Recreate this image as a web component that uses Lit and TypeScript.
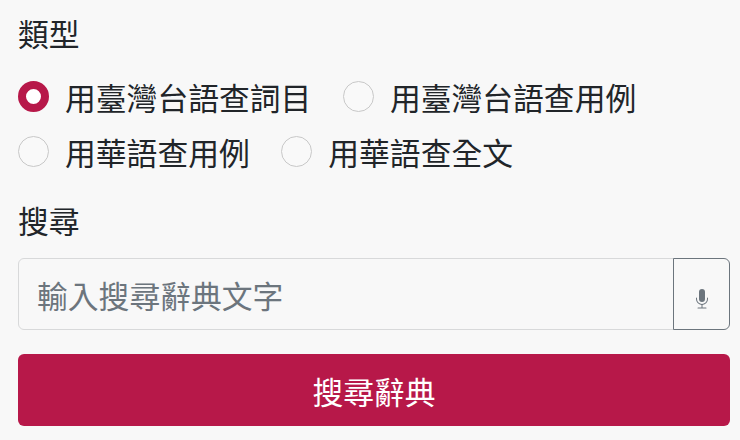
import { LitElement, html, css } from "lit";
import { customElement } from "lit/decorators.js";

@customElement("app-root")
export class AppRoot extends LitElement {
  static styles = css`
    :host { display: block; width: 740px; height: 440px; box-sizing: border-box; background: #f8f8f8; padding: 10px 10px 0 18px; overflow: hidden;
      font-family: "Noto Sans CJK TC", "Noto Sans CJK SC", sans-serif; color: #212529; font-size: 30.8px; line-height: 45px; }
    .label { height: 45px; }
    .radios { display: flex; flex-wrap: wrap; margin-top: 14px; width: 712px; }
    .radio { display: flex; align-items: center; gap: 16px; height: 55px; margin-right: 31.5px; }
    .dot { width: 31px; height: 31px; box-sizing: border-box; border-radius: 50%; border: 1px solid #c8c8c8; background: #f9f9f9; }
    .dot.on { border: 8.5px solid #b71849; background: #fff; }
    .search { margin-top: 18px; }
    .group { display: flex; margin-top: 16px; height: 72px; }
    .input { flex: 1; box-sizing: border-box; border: 1px solid #d8d9da; border-radius: 6px 0 0 6px; background: #f8f8f8; color: #6c757d; padding: 0 18px; display: flex; align-items: center; }
    .mic { width: 57px; box-sizing: border-box; border: 1px solid #6c757d; border-radius: 0 6px 6px 0; margin-left: -1px; display: flex; align-items: center; justify-content: center; padding-top: 9px; }
    .mic svg { width: 16px; height: 20px; fill: #6c757d; }
    .btn { margin-top: 24px; height: 72px; background: #b71849; color: #fff; border-radius: 6px; display: flex; align-items: center; justify-content: center; }
  `;
  render() {
    return html`
      <div class="label">類型</div>
      <div class="radios">
        <div class="radio"><span class="dot on"></span>用臺灣台語查詞目</div>
        <div class="radio"><span class="dot"></span>用臺灣台語查用例</div>
        <div class="radio"><span class="dot"></span>用華語查用例</div>
        <div class="radio"><span class="dot"></span>用華語查全文</div>
      </div>
      <div class="label search">搜尋</div>
      <div class="group">
        <div class="input">輸入搜尋辭典文字</div>
        <div class="mic"><svg viewBox="0 0 16 20"><path d="M5 3a3 3 0 0 1 6 0v7a3 3 0 0 1-6 0z"/><path d="M2.5 8.5a.5.5 0 0 1 .5.5v1a5 5 0 0 0 10 0V9a.5.5 0 0 1 1 0v1a6 6 0 0 1-5.5 6v2.5H12a.5.5 0 0 1 0 1H4a.5.5 0 0 1 0-1h3.500V16A6 6 0 0 1 2 10V9a.5.500 0 0 1 .5-.5z"/></svg></div>
      </div>
      <div class="btn">搜尋辭典</div>
    `;
  }
}
